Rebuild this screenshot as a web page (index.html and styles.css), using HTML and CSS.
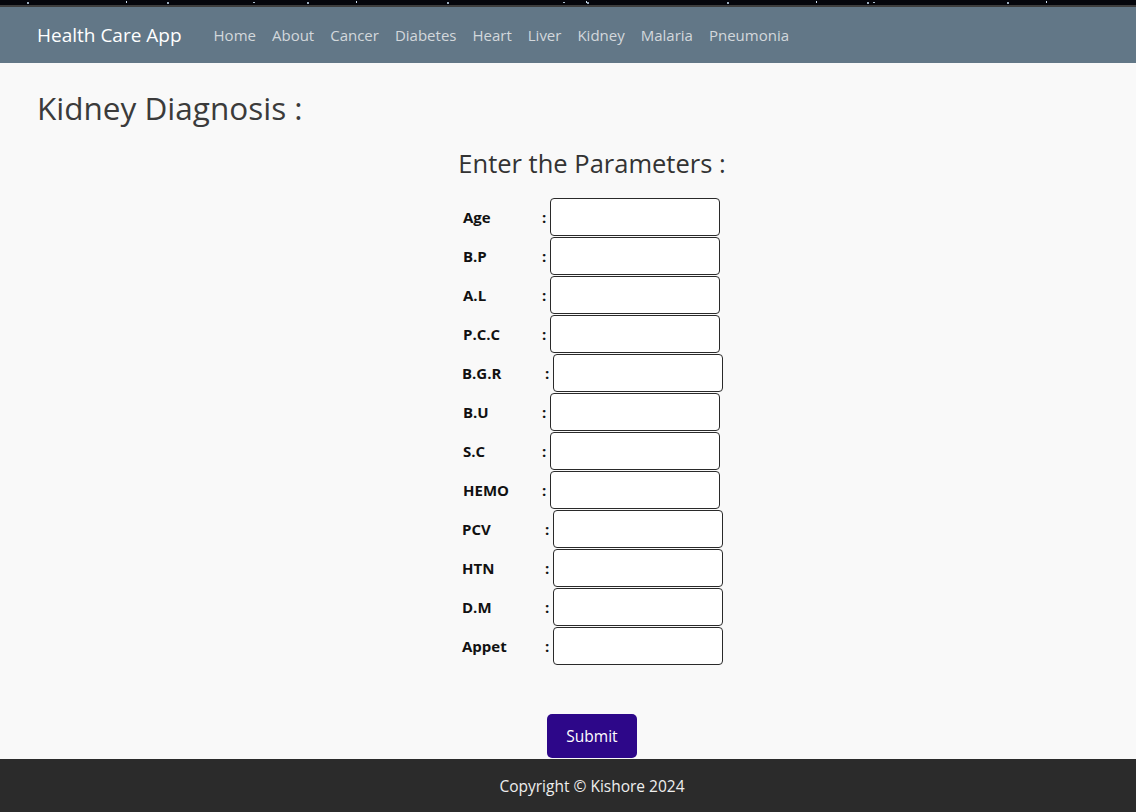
FILE: index.html
```html
<!DOCTYPE html>
<html lang="en">
<head>
<meta charset="utf-8">
<title>Kidney Diagnosis</title>
<link rel="stylesheet" href="styles.css">
</head>
<body>
<div class="sky"></div>
<nav class="navbar">
  <a class="brand" href="#">Health Care App</a>
  <ul class="nav-links">
    <li><a href="#">Home</a></li>
    <li><a href="#">About</a></li>
    <li><a href="#">Cancer</a></li>
    <li><a href="#">Diabetes</a></li>
    <li><a href="#">Heart</a></li>
    <li><a href="#">Liver</a></li>
    <li><a href="#">Kidney</a></li>
    <li><a href="#">Malaria</a></li>
    <li><a href="#">Pneumonia</a></li>
  </ul>
</nav>
<main class="main">
  <h1 class="page-title">Kidney Diagnosis :</h1>
  <section class="form-wrap">
    <h2 class="form-title">Enter the Parameters :</h2>
    <form class="params">
      <div class="row"><label class="lbl">Age</label><span class="colon">:</span><input class="field" type="text"></div>
      <div class="row"><label class="lbl">B.P</label><span class="colon">:</span><input class="field" type="text"></div>
      <div class="row"><label class="lbl">A.L</label><span class="colon">:</span><input class="field" type="text"></div>
      <div class="row"><label class="lbl">P.C.C</label><span class="colon">:</span><input class="field" type="text"></div>
      <div class="row shift-r"><label class="lbl">B.G.R</label><span class="colon">:</span><input class="field" type="text"></div>
      <div class="row"><label class="lbl">B.U</label><span class="colon">:</span><input class="field" type="text"></div>
      <div class="row"><label class="lbl">S.C</label><span class="colon">:</span><input class="field" type="text"></div>
      <div class="row"><label class="lbl">HEMO</label><span class="colon">:</span><input class="field" type="text"></div>
      <div class="row shift-r"><label class="lbl">PCV</label><span class="colon">:</span><input class="field" type="text"></div>
      <div class="row shift-r"><label class="lbl">HTN</label><span class="colon">:</span><input class="field" type="text"></div>
      <div class="row shift-r"><label class="lbl">D.M</label><span class="colon">:</span><input class="field" type="text"></div>
      <div class="row shift-r"><label class="lbl">Appet</label><span class="colon">:</span><input class="field" type="text"></div>
      <div class="actions"><button class="submit" type="button">Submit</button></div>
    </form>
  </section>
</main>
<footer class="footer">Copyright © Kishore 2024</footer>
</body>
</html>
```

FILE: styles.css
```css
* { box-sizing: border-box; }
html, body { margin: 0; padding: 0; }
body {
  font-family: "Open Sans", "Noto Sans", sans-serif;
  background: #f9f9f9;
  color: #333;
  height: 812px;
  display: flex;
  flex-direction: column;
}
.sky {
  height: 7px;
  background:
    radial-gradient(circle at 20% 60%, #9ab 0 1px, transparent 1px),
    radial-gradient(circle at 55% 40%, #cde 0 1px, transparent 1px),
    radial-gradient(circle at 82% 50%, #abc 0 1px, transparent 1px),
    linear-gradient(#05060c 0 5px, #3d3d3d 5px 7px);
  background-size: 140px 5px, 230px 5px, 310px 5px, 100% 100%;
  background-repeat: repeat-x, repeat-x, repeat-x, no-repeat;
}
.navbar {
  height: 56px;
  background: #627787;
  display: flex;
  align-items: center;
  padding-left: 37px;
}
.brand {
  color: #fff;
  text-decoration: none;
  font-size: 19px;
  margin-right: 24px;
}
.nav-links {
  list-style: none;
  margin: 0;
  padding: 0;
  display: flex;
}
.nav-links a {
  display: block;
  padding: 0 8px;
  color: #d3d8dc;
  text-decoration: none;
  font-size: 15px;
}
.main {
  flex: 1;
  padding: 0 37px;
}
.page-title {
  margin: 26px 0 0;
  font-size: 31.5px;
  font-weight: 500;
  color: #3b3b3b;
  line-height: 38px;
}
.form-wrap {
  display: flex;
  flex-direction: column;
  align-items: center;
  padding-left: 48px;
}
.form-title {
  margin: 20px 0 18px;
  font-size: 25.5px;
  font-weight: 500;
  color: #333;
  line-height: 32px;
}
.params {
  display: flex;
  flex-direction: column;
  align-items: center;
}
.row {
  display: flex;
  align-items: center;
  height: 39px;
  width: 260px;
}
.lbl {
  flex: none;
  width: 80px;
  padding-left: 1px;
  font-weight: 700;
  font-size: 15px;
  color: #111;
}
.shift-r .lbl {
  margin-left: -1px;
  width: 84px;
}
.colon {
  flex: none;
  width: 8px;
  font-weight: 700;
  font-size: 15px;
  color: #111;
}
.field {
  flex: none;
  width: 170px;
  height: 38px;
  border: 1px solid #2a2a2a;
  border-radius: 4px;
  background: #fff;
}
.actions {
  margin-top: 49px;
  display: flex;
  justify-content: center;
}
.submit {
  width: 90px;
  height: 44px;
  background: #2d0789;
  color: #fff;
  border: none;
  border-radius: 5px;
  font-family: inherit;
  font-size: 15.5px;
}
.footer {
  height: 53px;
  padding-left: 48px;
  background: #2b2b2b;
  color: #eee;
  font-size: 15.5px;
  display: flex;
  align-items: center;
  justify-content: center;
}
```
